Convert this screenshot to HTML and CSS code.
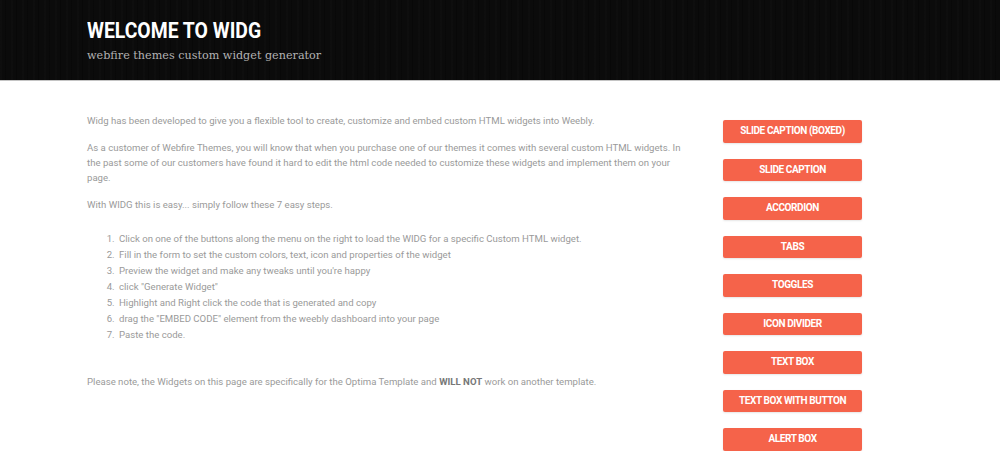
FILE: index.html
```html
<!DOCTYPE html>
<html lang="en">
<head>
    <meta charset="UTF-8">
    <meta name="viewport" content="width=device-width, initial-scale=1.0">
    <title>Widg - Webfire Themes</title>
    <link rel="stylesheet" href="styles.css">
</head>
<body>
    <header class="banner">
        <h1>WELCOME TO WIDG</h1>
        <p class="tagline">webfire themes custom widget generator</p>
    </header>
    <main class="page">
        <section class="intro">
            <p>Widg has been developed to give you a flexible tool to create, customize and embed custom HTML widgets into Weebly.</p>
            <p>As a customer of Webfire Themes, you will know that when you purchase one of our themes it comes with several custom HTML widgets. In the past some of our customers have found it hard to edit the html code needed to customize these widgets and implement them on your page.</p>
            <p>With WIDG this is easy... simply follow these 7 easy steps.</p>
            <ol class="steps">
                <li>Click on one of the buttons along the menu on the right to load the WIDG for a specific Custom HTML widget.</li>
                <li>Fill in the form to set the custom colors, text, icon and properties of the widget</li>
                <li>Preview the widget and make any tweaks until you're happy</li>
                <li>click "Generate Widget"</li>
                <li>Highlight and Right click the code that is generated and copy</li>
                <li>drag the "EMBED CODE" element from the weebly dashboard into your page</li>
                <li>Paste the code.</li>
            </ol>
            <p class="note">Please note, the Widgets on this page are specifically for the Optima Template and <strong>WILL NOT</strong> work on another template.</p>
        </section>
        <aside class="menu">
            <a href="#" class="button">SLIDE CAPTION (BOXED)</a>
            <a href="#" class="button">SLIDE CAPTION</a>
            <a href="#" class="button">ACCORDION</a>
            <a href="#" class="button">TABS</a>
            <a href="#" class="button">TOGGLES</a>
            <a href="#" class="button">ICON DIVIDER</a>
            <a href="#" class="button">TEXT BOX</a>
            <a href="#" class="button">TEXT BOX WITH BUTTON</a>
            <a href="#" class="button">ALERT BOX</a>
        </aside>
    </main>
</body>
</html>
```

FILE: styles.css
```css
body {
    margin: 0;
    font-family: 'Roboto', 'Liberation Sans', sans-serif;
    background-color: #fff;
    color: #9a9a9a;
}
.banner {
    height: 81px;
    box-sizing: border-box;
    padding: 18px 87px 0;
    background-color: #0b0b0b;
    background-image: repeating-linear-gradient(90deg, rgba(255, 255, 255, 0.012) 0 2px, transparent 2px 5px, rgba(0, 0, 0, 0.25) 5px 6px, transparent 6px 11px);
    border-bottom: 1px solid #c4c4c4;
}
.banner h1 {
    margin: 0;
    font-size: 22px;
    line-height: 26px;
    font-weight: 700;
    color: #fff;
    transform: scaleX(0.88);
    transform-origin: left center;
}
.tagline {
    margin: 3px 0 0;
    font-family: 'DejaVu Serif', 'Liberation Serif', serif;
    font-size: 11.2px;
    line-height: 18px;
    color: #b3b3b3;
}
.page {
    display: flex;
    gap: 19px;
    padding: 32px 0 0 87px;
}
.intro {
    width: 602px;
    margin-right: 15px;
    font-size: 9.6px;
    line-height: 15px;
}
.intro p {
    margin: 0 0 12px;
}
.steps {
    margin: 19px 0 31px;
    padding-left: 30px;
}
.steps li {
    line-height: 16px;
    padding-left: 2px;
}
.note strong {
    color: #777;
}
.menu {
    display: flex;
    flex-direction: column;
    gap: 16px;
    padding-top: 7px;
}
.button {
    display: block;
    width: 139px;
    height: 22.5px;
    line-height: 22.5px;
    background-color: #f5634a;
    border-radius: 2px;
    color: #fff;
    text-decoration: none;
    text-align: center;
    font-size: 10px;
    font-weight: 700;
    letter-spacing: -0.4px;
    box-shadow: 0 1px 2px rgba(0, 0, 0, 0.1);
}
```
